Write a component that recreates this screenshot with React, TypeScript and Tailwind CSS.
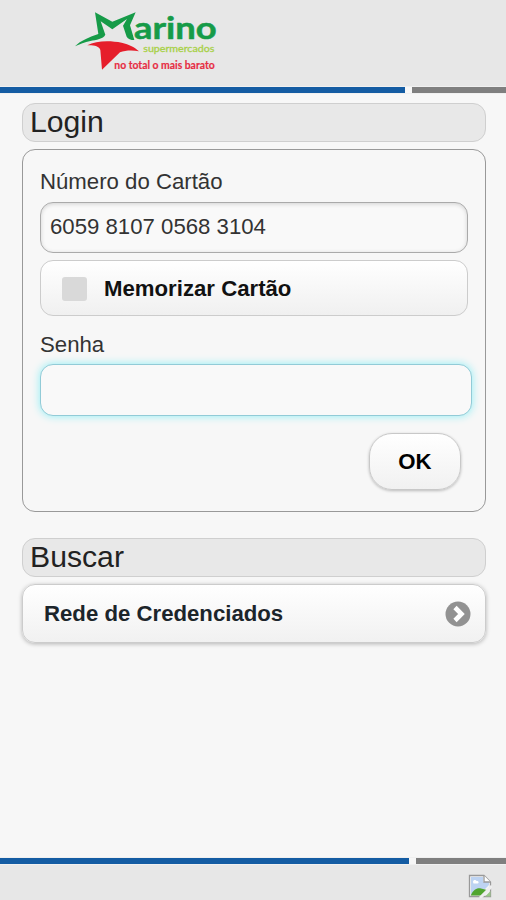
import type { ReactNode } from 'react'

function Logo() {
  return (
    <svg className="ml-[60px] block h-[85px] w-[170px]" viewBox="0 0 510 255" aria-label="Marino">
      <path
        d="M45 139 C60 123 86 112 115 102 L105 37 L157 65 L227 37 L210 76 L223 120 C212 120 204 117 200 110 L189 77 L201 57 L157 88 L122 64 L136 104 C130 117 108 119 91 123 C74 126 60 132 45 139 Z"
        fill="#169b48"
      />
      <path d="M82 136 C108 121 151 121 185 128 C208 133 224 142 237 154 C217 150 196 151 180 157 L126 209 L121 150 C118 139 101 135 82 136 Z" fill="#e61e2b" />
      <text x="222" y="118" textLength="248" lengthAdjust="spacingAndGlyphs" fontSize="92" fontWeight="700" fill="#169b48" stroke="#169b48" strokeWidth="1.5" strokeLinejoin="round" fontFamily="Lato, sans-serif">
        arino
      </text>
      <text x="250" y="157" textLength="213" lengthAdjust="spacingAndGlyphs" fontSize="30" fontWeight="400" fill="#a9d149" stroke="#a9d149" strokeWidth="1" fontFamily="Lato, sans-serif">
        supermercados
      </text>
      <text x="163" y="206" textLength="301" lengthAdjust="spacingAndGlyphs" fontSize="31" fontWeight="700" fill="#e62d43" stroke="#e62d43" strokeWidth="0.5" strokeLinejoin="round" fontFamily="Lato, sans-serif">
        no total o mais barato
      </text>
    </svg>
  )
}

function SectionTitle({ children }: { children: ReactNode }) {
  return (
    <h2 className="h-[39px] rounded-[13px] border border-[#cfcfcf] bg-[#e8e8e8] pl-[7px] text-[30.2px] leading-[35px] text-[#222]">
      {children}
    </h2>
  )
}

function BrokenImage() {
  return (
    <svg className="h-6 w-6" viewBox="0 0 24 24" fill="none">
      <path d="M1.5 1.5H16L22.5 8V22.5H1.5Z" fill="#f4f5f6" stroke="#999" strokeWidth="1.3" />
      <path d="M3 3H15V8H21V11L11 21H3Z" fill="#bdd3f2" />
      <path d="M5 8C5 5.8 8 5.5 8.5 7C11 6.5 11.5 9.5 9 9.5H5.5Z" fill="#fff" />
      <path d="M3 21C5 16 9 13.5 13 14.5L19 16L13 21.5H3Z" fill="#50a52f" />
      <path d="M16 1.5V8H22.5" fill="#fff" stroke="#999" strokeWidth="1.3" />
      <path d="M12 24L24 12" stroke="#eee" strokeWidth="3" />
      <path d="M17 22.5H22.5V17Z" fill="#9bc889" />
    </svg>
  )
}

export default function App() {
  return (
    <div className="flex h-[900px] w-[506px] flex-col overflow-hidden bg-[#f7f7f7] font-['Liberation_Sans',Arial,sans-serif] text-[22.2px] text-[#333]">
      <header className="h-[86px] shrink-0 bg-[#e7e7e7]">
        <Logo />
      </header>
      <div className="flex h-[8px] shrink-0 gap-[7px] border-y border-[#f0f0f0]">
        <div className="w-[405px] bg-[#145ca3]" />
        <div className="flex-1 bg-[#7f7f7f]" />
      </div>

      <main className="flex-1 pt-[9px] pr-[20px] pl-[22px]">
        <SectionTitle>Login</SectionTitle>
        <section className="mt-[7px] h-[363px] rounded-[13px] border border-[#999] px-[17px]">
          <label htmlFor="card" className="block pt-[19px] leading-[26px]">Número do Cartão</label>
          <input
            id="card"
            type="text"
            defaultValue="6059 8107 0568 3104"
            className="mt-[7px] block h-[51px] w-[428px] rounded-[13px] border-[1.5px] border-[#aaa] bg-[#f9f9f9] px-[9px] pb-[2px] shadow-[inset_0_1px_4px_rgba(0,0,0,0.16)] outline-none"
          />
          <button className="mt-[7px] flex h-[56px] w-[428px] items-center rounded-[13px] border border-[#ccc] bg-linear-to-b from-white to-[#f0f0f0] pl-[21px] font-bold text-[#111]">
            <span className="mt-[2px] mr-[17px] h-[24px] w-[25px] rounded-[3px] bg-[#d9d9d9]" />
            <span className="pt-px">Memorizar Cartão</span>
          </button>
          <label htmlFor="password" className="mt-[16px] block leading-[26px]">Senha</label>
          <input
            id="password"
            type="password"
            className="mt-[6px] block h-[52px] w-[432px] rounded-[13px] border-[1.5px] border-[#92cbd7] bg-[#f9f9f9] px-[9px] shadow-[0_0_8px_#8deef5] outline-none"
          />
          <button className="mt-[17px] ml-[329px] h-[57px] w-[92px] rounded-[23px] border-[1.5px] border-[#c8c8c8] bg-linear-to-b from-white to-[#f1f1f1] font-bold text-black shadow-[0_1px_3px_rgba(0,0,0,0.25)]">
            OK
          </button>
        </section>

        <div className="mt-[26px]">
          <SectionTitle>Buscar</SectionTitle>
        </div>
        <button className="mt-[7px] flex h-[59px] w-full items-center justify-between rounded-[13px] border border-[#ccc] bg-linear-to-b from-white to-[#f1f1f1] pr-[14px] pl-[21px] font-bold text-[#1c252b] shadow-[0_1px_4px_rgba(0,0,0,0.28)]">
          <span>Rede de Credenciados</span>
          <svg className="h-[26px] w-[26px]" viewBox="0 0 26 26" fill="none">
            <circle cx="13" cy="13" r="12.5" fill="#929292" />
            <path d="M10 6.5L16.5 13L10 19.5" stroke="#fff" strokeWidth="4.6" />
          </svg>
        </button>
      </main>

      <div className="flex h-[8px] shrink-0 gap-[7px] border-y border-[#f0f0f0]">
        <div className="w-[409px] bg-[#145ca3]" />
        <div className="flex-1 bg-[#7f7f7f]" />
      </div>
      <footer className="flex h-[35px] shrink-0 justify-end bg-[#e7e7e7] pt-[9px] pr-[14px]">
        <BrokenImage />
      </footer>
    </div>
  )
}
